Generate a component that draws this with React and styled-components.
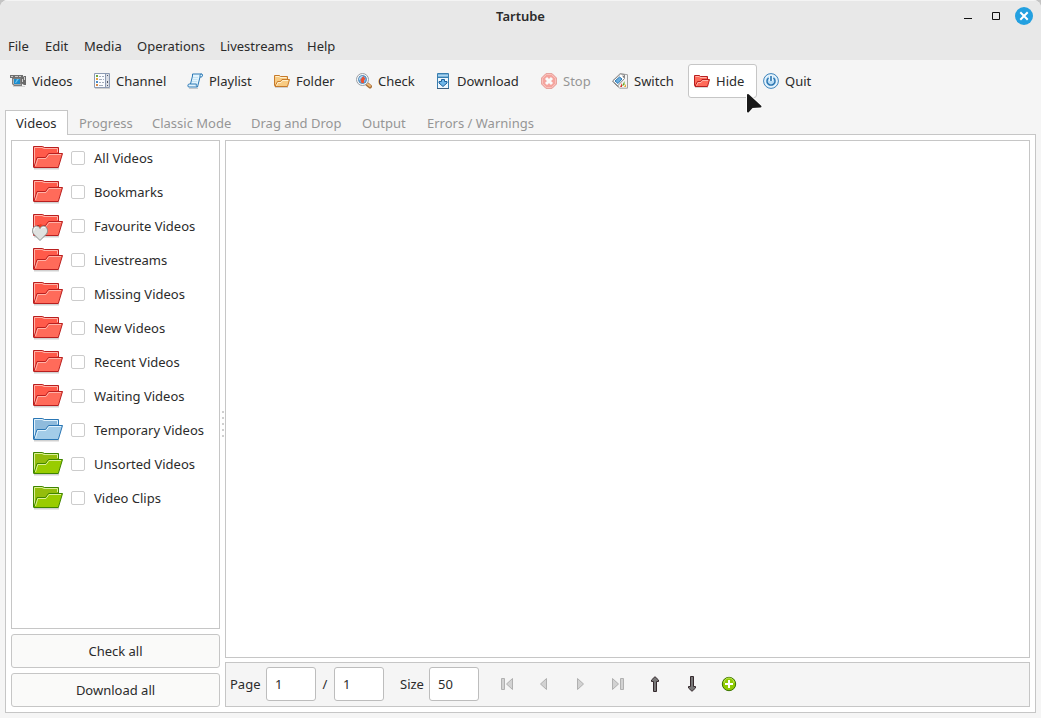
import React from "react";
import styled, { createGlobalStyle } from "styled-components";

const GlobalStyle = createGlobalStyle`
  :root {
    --color-header: #e8e8e8;
    --color-bg: #f5f5f5;
    --color-base: #ffffff;
    --color-border: #c6c6c6;
    --color-text: #2b2b2b;
    --color-text-off: #959595;
    --color-accent: #23a0e0;
  }

  *,
  *::before,
  *::after {
    box-sizing: border-box;
  }

  body {
    margin: 0;
    background-color: #c4c4c4;
  }

  body,
  button,
  input {
    font-family: "Noto Sans", "Open Sans", sans-serif;
    font-size: 13px;
    line-height: 18px;
    color: var(--color-text);
  }
`;

const Window = styled.div`
  min-height: 100vh;
  display: flex;
  flex-direction: column;
  background-color: var(--color-bg);
  border-radius: 8px 8px 0 0;
  overflow: hidden;
`;

const TitleBar = styled.header`
  display: grid;
  grid-template-columns: 1fr auto 1fr;
  align-items: center;
  height: 32px;
  padding: 0 8px 1px;
  background-color: var(--color-header);
  border-top: 1px solid #f4f4f4;
`;

const Title = styled.h1`
  grid-column: 2;
  margin: 0;
  font-size: 13px;
  line-height: 18px;
  font-weight: 600;
`;

const WindowButtons = styled.div`
  display: flex;
  justify-content: flex-end;
  gap: 10px;
`;

const WindowButton = styled.button`
  display: flex;
  width: 18px;
  height: 18px;
  padding: 0;
  border: none;
  border-radius: 50%;
  background-color: ${props => (props.$close ? "var(--color-accent)" : "transparent")};
`;

const MenuBar = styled.nav`
  display: flex;
  align-items: center;
  height: 28px;
  background-color: var(--color-header);
`;

const MenuItem = styled.button`
  width: ${props => props.$width}px;
  padding: 0 0 0 8px;
  border: none;
  background: none;
  text-align: left;
  white-space: nowrap;
`;

const ToolBar = styled.div`
  display: flex;
  padding: 4px;
`;

const Tool = styled.button`
  position: relative;
  display: flex;
  align-items: center;
  gap: 6px;
  width: ${props => props.$width}px;
  height: 34px;
  padding: 0 0 0 5px;
  border: 1px solid ${props => (props.$hover ? "var(--color-border)" : "transparent")};
  border-radius: 3px;
  background-color: ${props => (props.$hover ? "var(--color-base)" : "transparent")};
  white-space: nowrap;

  &:disabled {
    color: var(--color-text-off);
  }

  &:disabled > svg {
    opacity: 0.5;
  }
`;

const Pointer = styled.svg`
  position: absolute;
  top: 28px;
  left: 57px;
  z-index: 1;
`;

const Notebook = styled.main`
  flex: 1;
  display: flex;
  flex-direction: column;
  padding: 8px 5px 5px;
`;

const TabList = styled.div`
  display: flex;
  height: 24px;
`;

const Tab = styled.button`
  width: ${props => props.$width}px;
  height: 25px;
  padding: 0 0 0 10px;
  border: 1px solid transparent;
  border-bottom: none;
  background: none;
  color: var(--color-text-off);
  text-align: left;
  white-space: nowrap;

  &[aria-selected="true"] {
    z-index: 1;
    border-color: var(--color-border);
    background-color: var(--color-base);
    color: var(--color-text);
  }
`;

const Page = styled.section`
  flex: 1;
  display: flex;
  padding: 5px;
  border: 1px solid var(--color-border);
  background-color: var(--color-base);
`;

const SidePane = styled.div`
  flex: none;
  display: flex;
  flex-direction: column;
  gap: 5px;
  width: 209px;
`;

const Tree = styled.ul`
  flex: 1;
  margin: 0;
  padding: 0;
  border: 1px solid var(--color-border);
  list-style: none;
`;

const TreeRow = styled.label`
  display: flex;
  align-items: center;
  height: 34px;
  padding-left: 20px;
  white-space: nowrap;
`;

const CheckBox = styled.input`
  appearance: none;
  width: 14px;
  height: 14px;
  margin: 0 9px 0 7px;
  border: 1px solid #cccccc;
  border-radius: 2px;
  background-color: var(--color-base);
`;

const WideButton = styled.button`
  height: 34px;
  padding: 0;
  border: 1px solid var(--color-border);
  border-radius: 3px;
  background-color: #fafaf9;
`;

const Handle = styled.div`
  flex: none;
  display: flex;
  flex-direction: column;
  align-items: center;
  justify-content: center;
  gap: 4px;
  width: 5px;
`;

const Dot = styled.span`
  width: 2px;
  height: 2px;
  border-radius: 1px;
  background-color: #bfbfbf;
`;

const MainPane = styled.div`
  flex: 1;
  display: flex;
  flex-direction: column;
  gap: 4px;
`;

const VideoList = styled.div`
  flex: 1;
  border: 1px solid var(--color-border);
`;

const PageBar = styled.form`
  display: flex;
  align-items: center;
  height: 45px;
  padding: 0 4px 1px;
  border: 1px solid var(--color-border);
  background-color: var(--color-bg);
`;

const EntryLabel = styled.label`
  width: ${props => props.$width}px;
  text-align: ${props => (props.$center ? "center" : "left")};
`;

const Entry = styled.input`
  width: 50px;
  height: 34px;
  padding: 0 8px;
  border: 1px solid #bdbdbd;
  border-radius: 3px;
  background-color: var(--color-base);
`;

const PageButtons = styled.div`
  display: flex;
  margin-left: 9px;
`;

const PageButton = styled.button`
  display: flex;
  align-items: center;
  justify-content: center;
  width: 37px;
  height: 34px;
  padding: 0;
  border: none;
  background: none;
`;

const Spacer = styled.span`
  width: 16px;
`;

const Icon = ({ size = 16, children }) => (
  <svg width={size} height={size} viewBox={`0 0 ${size} ${size}`} fill="none" aria-hidden="true">
    {children}
  </svg>
);

const VideosIcon = () => (
  <Icon>
    <path d="M0 2h13v3H0z" fill="#6f6f6f" />
    <path d="M1 3h2v1H1zM5 3h3v1H5zM9 3h2v1H9z" fill="#c8c8c8" />
    <path d="M2 5h10v8H4l-2-2z" fill="#7d7d7d" />
    <path d="M3 6h1v5H3z" fill="#b5b5b5" />
    <path d="M4 6h6v5H4z" fill="#1b8ccd" />
    <path d="M5 10l2-4h2l-3 4z" fill="#6cc4f0" />
    <path d="M11 5h1l2-2h2v9h-2l-3-2z" fill="#6a6a6a" />
    <path d="M12 6h1v3h-1zM14 4h1v3h-1z" fill="#cfcfcf" />
    <path d="M4 11.500h7" stroke="#a8a8a8" />
    <path d="M3 13.500h12" stroke="#d2d2d2" />
  </Icon>
);

const ChannelIcon = () => (
  <Icon>
    <path d="M.5.5h15v14H.5z" fill="#fafcff" stroke="#8d9bb3" />
    <path d="M12 1h3v13h-3z" fill="#d8dce4" />
    <path d="M11.500 1v13" stroke="#8d9bb3" />
    <path d="M2 2h2v2H2z" fill="#70a83b" />
    <path d="M2 5h2v2H2z" fill="#e5a13c" />
    <path d="M2 8h2v2H2z" fill="#488bc9" />
    <path d="M2 11h2v2H2z" fill="#d78a45" />
    <path d="M5 3.500h2m1 0h2M5 6.500h3m1 0h1M5 9.500h2m1 0h2M5 12.500h4" stroke="#a4adbb" />
    <path d="M13 2h1v1h-1zM13 8h1v2h-1zM13 12h1v1h-1z" fill="#4f5562" />
    <path d="M1 15.500h15" stroke="#cfcfcf" />
  </Icon>
);

const PlaylistIcon = () => (
  <Icon>
    <path d="M5.500 1h9.500c1 1 .5 3-.8 3H13l-2.500 10h-9c-1-1-.7-3 .7-3h1.300l2-8z" fill="#e3f4fd" stroke="#2b78b5" strokeLinejoin="round" />
    <path d="M13 4V2.500c0-1 .7-1.500 1.500-1.500M3.500 11h6c-.5 1-.3 2 .8 3" stroke="#2b78b5" />
    <path d="M6 4.500h5M5.500 6.500h5M5 8.500h5" stroke="#c3e2f3" />
    <path d="M2 15.500h9" stroke="#c5c9cc" />
  </Icon>
);

const SmallFolder = ({ line, fill, light }) => (
  <Icon>
    <path d="M.5 2.500h5l1 1h7v9H.5z" fill={fill} stroke={line} strokeLinejoin="round" />
    <path d="M1.500 3.500H5l1 1h6.500" stroke={light} />
    <path d="M1 13.500l2.500-5h3l1.500-2h7.500l-2 7z" fill={fill} stroke={line} strokeLinejoin="round" />
    <path d="M2.500 12.500l1.500-3h3l1.500-2h5.500" stroke={light} />
    <path d="M1 14.500h13" stroke="#000" strokeOpacity=".15" />
  </Icon>
);

const CheckIcon = () => (
  <Icon>
    <path d="M11 11l3 2.500" stroke="#a9713a" strokeWidth="4" strokeLinecap="round" />
    <path d="M11.500 11l2.500 2" stroke="#f0ba78" strokeWidth="2" strokeLinecap="round" />
    <circle cx="6.500" cy="6.500" r="6" fill="#f7f9fb" stroke="#9a9ea3" />
    <circle cx="6.500" cy="6.500" r="4" fill="#6fb2e6" stroke="#5585b0" />
    <path d="M4.500 7l2.500-4 2.500 3-1.500 1v3H5.500z" fill="#ee5132" />
    <path d="M3.500 6.500a3 3 0 0 1 3-3" stroke="#d3efff" />
  </Icon>
);

const DownloadIcon = () => (
  <Icon>
    <path d="M2.500.5h11v15h-11z" fill="#eef7fd" stroke="#397eaf" />
    <path d="M3 1h10v3H3z" fill="#7ab4dc" />
    <path d="M2 4.500h12" stroke="#397eaf" />
    <path d="M3 2.500h10" stroke="#aed5ef" />
    <path d="M6.500 6.500h3v2h2.500v1.500l-4 3.500-4-3.500V8.500h2.500z" fill="#6fb6e8" stroke="#1c619c" strokeLinejoin="round" />
    <path d="M2 15.500h12" stroke="#3d5d7d" />
  </Icon>
);

const StopIcon = () => (
  <Icon>
    <path d="M5 .5h6L15.500 5v6L11 15.500H5L.5 11V5z" fill="#f4564a" stroke="#d8564c" strokeLinejoin="round" />
    <path d="M5.500 1.500h5l4 4v5l-4 4h-5l-4-4v-5z" stroke="#ff9184" />
    <path d="M5 5l6 6M11 5l-6 6" stroke="#fff" strokeWidth="3" />
  </Icon>
);

const SwitchIcon = () => (
  <Icon>
    <path d="M.5 8L8 .7l7.500 1v13.500h-8z" fill="#f4f4f4" stroke="#a1a1a1" strokeLinejoin="round" />
    <path d="M.7 8L8.500 1l4 .5v4L5.500 13z" fill="#fff" stroke="#898989" strokeLinejoin="round" />
    <path d="M3 8l4.500-4L10 6l-4 4.500z" fill="#69aee0" stroke="#2e78b1" />
    <path d="M11 2.500l.5 2" stroke="#555" />
    <path d="M8 14l2-4v4z" fill="#d8332b" />
    <path d="M10 13l2.500-5v4z" fill="#64a51e" />
    <path d="M12 14l2-3v3z" fill="#e7a72e" />
    <path d="M2 9.500l4.500 4.500" stroke="#777" />
  </Icon>
);

const QuitIcon = () => (
  <Icon>
    <circle cx="8" cy="8" r="7.400" fill="#e4f2fc" stroke="#3a82ba" />
    <circle cx="8" cy="8" r="5.800" fill="#b9dcf5" stroke="#e8f5fd" />
    <path d="M5.500 5a4 4 0 1 0 5 0" stroke="#2a74ae" strokeWidth="1.400" />
    <path d="M8 3v5" stroke="#e8f5fd" strokeWidth="4" />
    <path d="M8 3v5" stroke="#2a74ae" strokeWidth="1.600" />
  </Icon>
);

const palettes = {
  red: { line: "#b91f1f", fill: "#ff6b5a", light: "#ffb3a8", back: "#ff5a4a" },
  blue: { line: "#2a76b4", fill: "#a3cce8", light: "#e0f2fd", back: "#8fbbdc" },
  green: { line: "#3f8500", fill: "#99cc00", light: "#dcf096", back: "#94bd0c" },
  orange: { line: "#c77a2a", fill: "#f8cb82", light: "#fff0cf" },
};

const FolderIcon = ({ color, heart }) => {
  const { line, fill, light, back } = palettes[color];

  return (
    <Icon size={32}>
      <path d="M2 26.500h25" stroke="#000" strokeOpacity=".18" strokeWidth="2" />
      <path d="M1.500 25V4.500h9l2 1h14V11L23 25z" fill={back} stroke={line} strokeLinejoin="round" />
      <path d="M2.500 23V5.500H10l2 1h13.500V10" stroke={light} />
      <path d="M1.800 25.500L5 15.500h8.500l3-4h14l-4.200 14z" fill={fill} stroke={line} strokeLinejoin="round" />
      <path d="M3.500 24l2.300-7.500H14l3-4h12" stroke={light} />
      {heart && (
        <>
          <path d="M6 17l2-3 3 1-2 4z" fill="#ee3c22" />
          <path
            d="M8 30.500L1.500 24C-.5 21.500.5 16.500 4 16c2 0 3.500 1 4 2.500.5-1.500 2-2.500 4-2.500 3.500.5 4.500 5.500 2.500 8z"
            fill="#dfe2e0"
            stroke="#8a8d8b"
          />
          <path d="M2 20.500c0-2 1-3.300 2.500-3.300M9.500 18.500c.8-1.300 2.500-1.500 3.500-.8" stroke="#fff" />
        </>
      )}
    </Icon>
  );
};

const arrow = { fill: "#d2d2d2", stroke: "#b0b0b0", strokeLinejoin: "round" };

const FirstIcon = () => (
  <Icon>
    <path d="M2.500 2.500h3v11h-3zM13.500 2.500v11L7.500 8z" {...arrow} />
  </Icon>
);

const PrevIcon = () => (
  <Icon>
    <path d="M10.500 2.500v11L4.500 8z" {...arrow} />
  </Icon>
);

const NextIcon = () => (
  <Icon>
    <path d="M4.500 2.500v11l6-5.500z" {...arrow} />
  </Icon>
);

const LastIcon = () => (
  <Icon>
    <path d="M2.500 2.500v11l6-5.500zM10.500 2.500h3v11h-3z" {...arrow} />
  </Icon>
);

const UpIcon = () => (
  <Icon>
    <path d="M6.500 15.500v-10h-2V4L8 .7 11.500 4v1.500h-2v10z" fill="#777" stroke="#35292d" strokeLinejoin="round" />
  </Icon>
);

const DownIcon = () => (
  <Icon>
    <path d="M6.500.5v10h-2V12L8 15.300l3.500-3.300v-1.500h-2V.5z" fill="#777" stroke="#35292d" strokeLinejoin="round" />
  </Icon>
);

const AddIcon = () => (
  <Icon>
    <circle cx="8" cy="8" r="6.700" fill="#8fcb00" stroke="#397300" />
    <path d="M3 7a5 5 0 0 1 10 0" stroke="#c1e65e" />
    <path d="M8 4v8M4 8h8" stroke="#fff" strokeWidth="2" />
  </Icon>
);

const menus = [
  ["File", 37],
  ["Edit", 39],
  ["Media", 53],
  ["Operations", 83],
  ["Livestreams", 87],
  ["Help", 44],
];

const tools = [
  { name: "Videos", width: 84, icon: <VideosIcon /> },
  { name: "Channel", width: 93, icon: <ChannelIcon /> },
  { name: "Playlist", width: 87, icon: <PlaylistIcon /> },
  { name: "Folder", width: 82, icon: <SmallFolder {...palettes.orange} /> },
  { name: "Check", width: 79, icon: <CheckIcon /> },
  { name: "Download", width: 106, icon: <DownloadIcon /> },
  { name: "Stop", width: 71, icon: <StopIcon />, disabled: true },
  { name: "Switch", width: 82, icon: <SwitchIcon /> },
  { name: "Hide", width: 69, icon: <SmallFolder {...palettes.red} />, hover: true },
  { name: "Quit", width: 68, icon: <QuitIcon /> },
];

const tabs = [
  ["Videos", 63],
  ["Progress", 73],
  ["Classic Mode", 99],
  ["Drag and Drop", 111],
  ["Output", 65],
  ["Errors / Warnings", 126],
];

const folders = [
  { name: "All Videos", color: "red" },
  { name: "Bookmarks", color: "red" },
  { name: "Favourite Videos", color: "red", heart: true },
  { name: "Livestreams", color: "red" },
  { name: "Missing Videos", color: "red" },
  { name: "New Videos", color: "red" },
  { name: "Recent Videos", color: "red" },
  { name: "Waiting Videos", color: "red" },
  { name: "Temporary Videos", color: "blue" },
  { name: "Unsorted Videos", color: "green" },
  { name: "Video Clips", color: "green" },
];

const App = () => {
  return (
    <>
      <GlobalStyle />
      <Window>
        <TitleBar>
          <Title>Tartube</Title>
          <WindowButtons>
            <WindowButton aria-label="Minimise">
              <Icon size={18}>
                <path d="M5 11.500h8" stroke="#111" />
              </Icon>
            </WindowButton>
            <WindowButton aria-label="Maximise">
              <Icon size={18}>
                <path d="M5.500 5.500h7v7h-7z" stroke="#111" />
              </Icon>
            </WindowButton>
            <WindowButton $close aria-label="Close">
              <Icon size={18}>
                <path d="M6 6l6 6M12 6l-6 6" stroke="#fff" strokeWidth="2" strokeLinecap="square" />
              </Icon>
            </WindowButton>
          </WindowButtons>
        </TitleBar>

        <MenuBar>
          {menus.map(([name, width]) => (
            <MenuItem key={name} $width={width}>
              {name}
            </MenuItem>
          ))}
        </MenuBar>

        <ToolBar>
          {tools.map(({ name, width, icon, disabled, hover }) => (
            <Tool key={name} $width={width} $hover={hover} disabled={disabled}>
              {icon}
              {name}
              {hover && (
                <Pointer width="18" height="22" viewBox="0 0 18 22" aria-hidden="true">
                  <path
                    d="M2 2v16.500l4-4.500 8.500-.5z"
                    fill="#1a1a1a"
                    stroke="#fff"
                    strokeWidth="4"
                    strokeLinejoin="round"
                  />
                  <path
                    d="M2 2v16.500l4-4.500 8.500-.5z"
                    fill="#1a1a1a"
                    stroke="#1a1a1a"
                    strokeWidth="2"
                    strokeLinejoin="round"
                  />
                </Pointer>
              )}
            </Tool>
          ))}
        </ToolBar>

        <Notebook>
          <TabList role="tablist">
            {tabs.map(([name, width], i) => (
              <Tab key={name} role="tab" aria-selected={i === 0} $width={width}>
                {name}
              </Tab>
            ))}
          </TabList>

          <Page>
            <SidePane>
              <Tree>
                {folders.map(({ name, color, heart }) => (
                  <li key={name}>
                    <TreeRow>
                      <FolderIcon color={color} heart={heart} />
                      <CheckBox type="checkbox" />
                      {name}
                    </TreeRow>
                  </li>
                ))}
              </Tree>
              <WideButton>Check all</WideButton>
              <WideButton>Download all</WideButton>
            </SidePane>

            <Handle>
              <Dot />
              <Dot />
              <Dot />
              <Dot />
              <Dot />
            </Handle>

            <MainPane>
              <VideoList />
              <PageBar>
                <EntryLabel htmlFor="page" $width={36}>
                  Page
                </EntryLabel>
                <Entry id="page" defaultValue="1" />
                <EntryLabel htmlFor="last" $width={18} $center>
                  /
                </EntryLabel>
                <Entry id="last" defaultValue="1" />
                <Spacer />
                <EntryLabel htmlFor="size" $width={29}>
                  Size
                </EntryLabel>
                <Entry id="size" defaultValue="50" />
                <PageButtons>
                  <PageButton type="button" aria-label="First page" disabled>
                    <FirstIcon />
                  </PageButton>
                  <PageButton type="button" aria-label="Previous page" disabled>
                    <PrevIcon />
                  </PageButton>
                  <PageButton type="button" aria-label="Next page" disabled>
                    <NextIcon />
                  </PageButton>
                  <PageButton type="button" aria-label="Last page" disabled>
                    <LastIcon />
                  </PageButton>
                  <PageButton type="button" aria-label="Scroll up">
                    <UpIcon />
                  </PageButton>
                  <PageButton type="button" aria-label="Scroll down">
                    <DownIcon />
                  </PageButton>
                  <PageButton type="button" aria-label="Show filters">
                    <AddIcon />
                  </PageButton>
                </PageButtons>
              </PageBar>
            </MainPane>
          </Page>
        </Notebook>
      </Window>
    </>
  );
};

export default App;
